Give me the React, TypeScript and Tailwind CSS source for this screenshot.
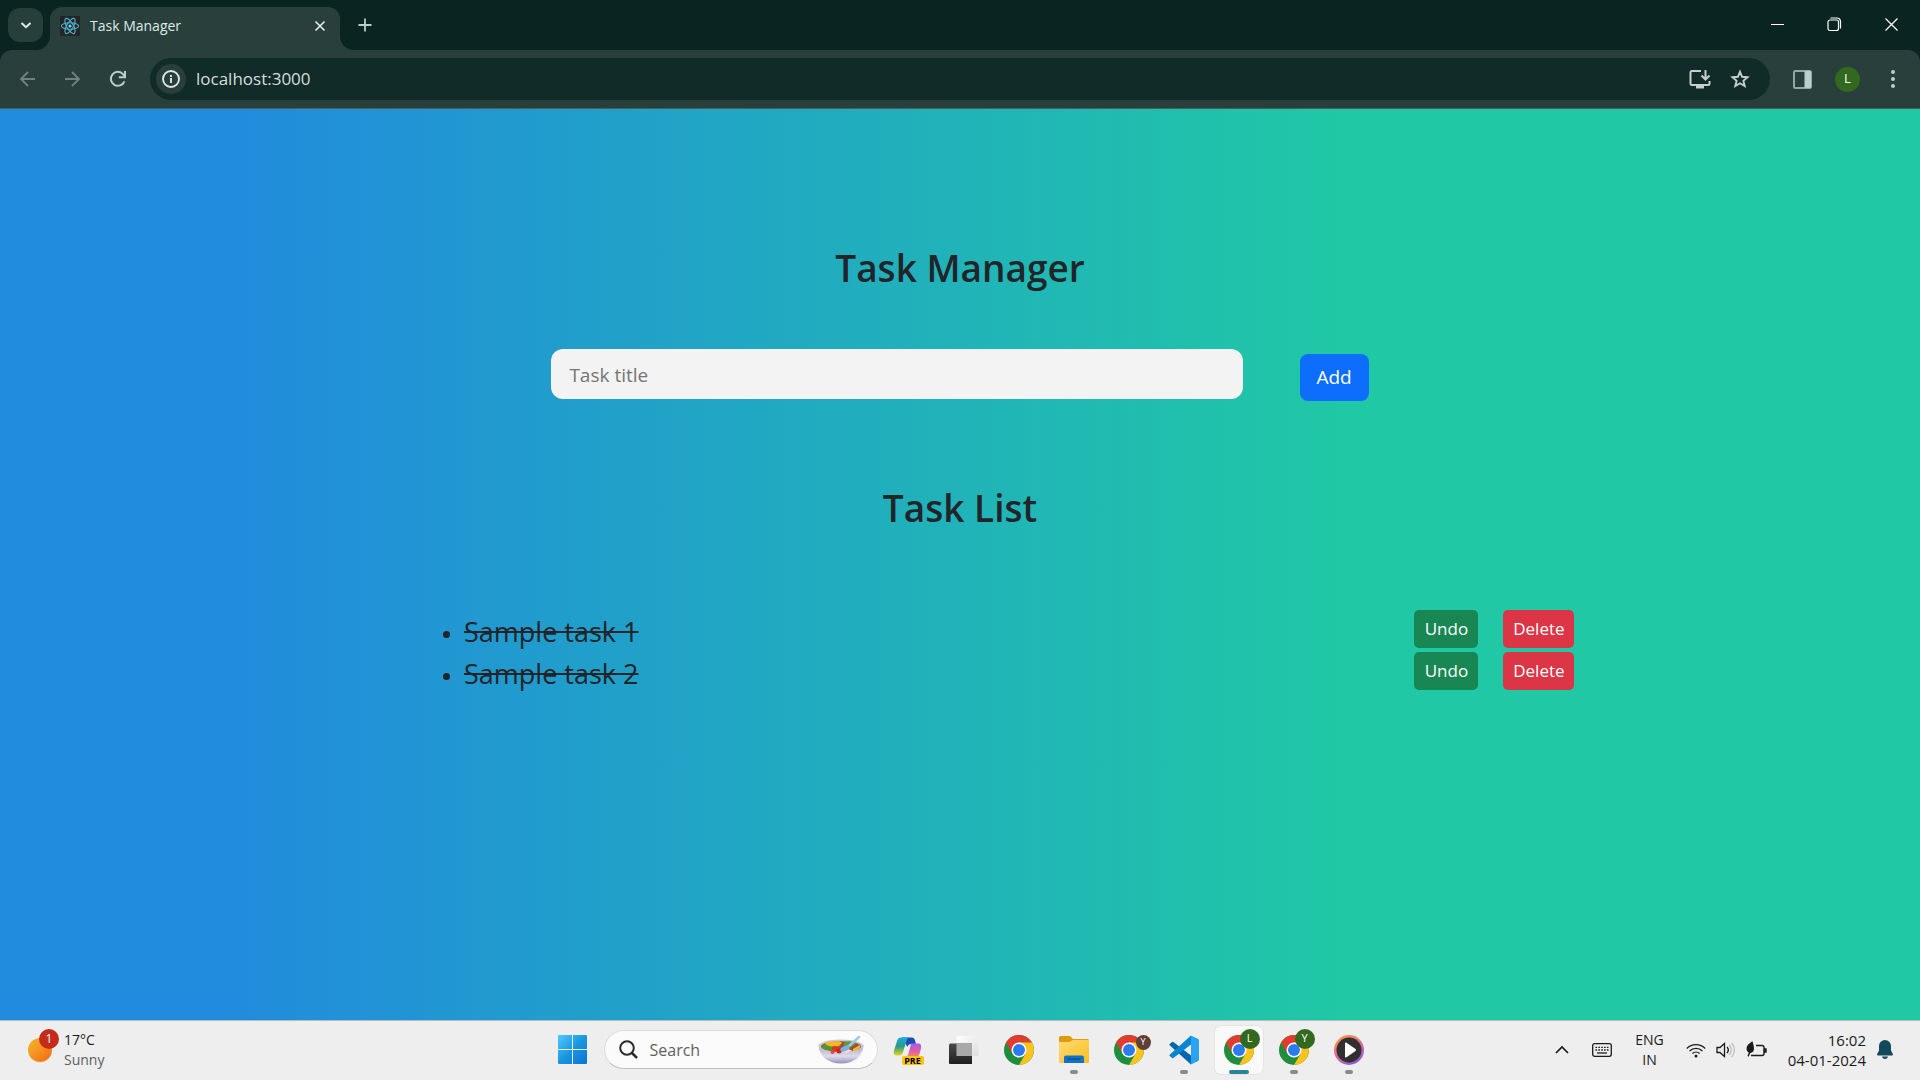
import React from "react";

function ReactLogo() {
  return (
    <svg viewBox="0 0 20 20" className="size-5 shrink-0" aria-hidden="true">
      <rect width="20" height="20" rx="1" fill="#242526" />
      <g fill="none" stroke="#4fb3cc" strokeWidth="1.1">
        <ellipse cx="10" cy="10" rx="8.6" ry="3.3" />
        <ellipse cx="10" cy="10" rx="8.6" ry="3.3" transform="rotate(60 10 10)" />
        <ellipse cx="10" cy="10" rx="8.6" ry="3.3" transform="rotate(120 10 10)" />
      </g>
      <circle cx="10" cy="10" r="1.6" fill="#61dafb" />
    </svg>
  );
}

function TabStrip() {
  return (
    <div className="flex h-[50px] items-end bg-[#0a2421] pl-2 text-[#dfe9e6]">
      <button aria-label="Search tabs" className="mb-2 grid h-[34px] w-[35px] place-items-center rounded-xl bg-[#263f3b]">
        <svg viewBox="0 0 12 12" className="size-3" fill="none" stroke="currentColor" strokeWidth="2" aria-hidden="true">
          <path d="M1.5 4 6 8.2 10.5 4" />
        </svg>
      </button>
      <div className="relative ml-[7px] flex h-[43px] w-[290px] items-center rounded-t-xl bg-[#293f3c] pr-3 pb-[6px] pl-[10px]">
        <svg viewBox="0 0 14 14" className="absolute bottom-0 -left-[14px] size-[14px] fill-[#293f3c]" aria-hidden="true">
          <path d="M14 0A14 14 0 0 1 0 14H14Z" />
        </svg>
        <svg viewBox="0 0 14 14" className="absolute -right-[14px] bottom-0 size-[14px] fill-[#293f3c]" aria-hidden="true">
          <path d="M0 0A14 14 0 0 0 14 14H0Z" />
        </svg>
        <ReactLogo />
        <span className="ml-[10px] flex-1 text-sm">Task Manager</span>
        <button aria-label="Close tab" className="grid size-4 place-items-center">
          <svg viewBox="0 0 12 12" className="size-3" stroke="currentColor" strokeWidth="1.7" aria-hidden="true">
            <path d="M1.5 1.5 10.5 10.5M10.5 1.5 1.5 10.5" />
          </svg>
        </button>
      </div>
      <button aria-label="New tab" className="mb-[18px] ml-[18px] text-[#b7d0ca]">
        <svg viewBox="0 0 14 14" className="size-[14px]" stroke="currentColor" strokeWidth="1.8" aria-hidden="true">
          <path d="M7 .5v13M.5 7h13" />
        </svg>
      </button>
      <div className="mb-[18px] ml-auto flex items-center gap-[42px] pr-[21px] text-white">
        <button aria-label="Minimize">
          <svg viewBox="0 0 15 15" className="size-[15px]" stroke="currentColor" aria-hidden="true">
            <path d="M1 7.5h13" />
          </svg>
        </button>
        <button aria-label="Restore">
          <svg viewBox="0 0 15 15" className="size-[15px]" fill="none" stroke="currentColor" strokeWidth="1.2" aria-hidden="true">
            <rect x="1" y="3" width="10.5" height="10.5" rx="2" />
            <path d="M3.5 1h6.500a3.500 3.500 0 0 1 3.500 3.500v7" />
          </svg>
        </button>
        <button aria-label="Close">
          <svg viewBox="0 0 15 15" className="size-[15px]" stroke="currentColor" strokeWidth="1.2" aria-hidden="true">
            <path d="M1.5 1.5 13.5 13.5M13.5 1.5 1.5 13.5" />
          </svg>
        </button>
      </div>
    </div>
  );
}

function AddressBar() {
  return (
    <div className="bg-[#0a2421]">
      <div className="flex h-[59px] items-center rounded-t-xl border-b border-[#4a5d59] bg-[#293f3c] pr-[17px] pl-[18px]">
        <div className="flex items-center gap-[25px]">
          <button aria-label="Back" className="text-[#70827e]">
            <svg viewBox="0 0 20 20" className="size-5" fill="none" stroke="currentColor" strokeWidth="1.8" aria-hidden="true">
              <path d="M17 10H3.5M10 3 3 10l7 7" />
            </svg>
          </button>
          <button aria-label="Forward" className="text-[#70827e]">
            <svg viewBox="0 0 20 20" className="size-5" fill="none" stroke="currentColor" strokeWidth="1.8" aria-hidden="true">
              <path d="M2 10h13.5M9 3l7 7-7 7" />
            </svg>
          </button>
          <button aria-label="Reload" className="text-[#b7d0ca]">
            <svg viewBox="0 0 20 20" className="size-5" fill="none" stroke="currentColor" strokeWidth="2" aria-hidden="true">
              <path d="M16.4 12.3A7 7 0 1 1 15.2 5.3L17 7.500" />
              <path d="M17 2v6.2h-6.2" />
            </svg>
          </button>
        </div>
        <div className="ml-[22px] flex h-[42px] flex-1 items-center rounded-full bg-[#112b28] pr-5 pl-[6px]">
          <button aria-label="View site information" className="grid size-[30px] place-items-center rounded-full bg-[#293f3c] text-[#dfe6e4]">
            <svg viewBox="0 0 18 18" className="size-[18px]" fill="none" stroke="currentColor" strokeWidth="1.9" aria-hidden="true">
              <circle cx="9" cy="9" r="8" />
              <path d="M9 8v5M9 5v2" />
            </svg>
          </button>
          <input aria-label="Address" defaultValue="localhost:3000" className="ml-[10px] min-w-0 flex-1 bg-transparent text-[17px] text-[#d5dedc] outline-none" />
          <div className="flex items-center gap-[19px] text-[#c7cecd]">
            <button aria-label="Install app">
              <svg viewBox="0 0 22 20" className="h-5 w-[22px]" fill="none" stroke="currentColor" strokeWidth="2" aria-hidden="true">
                <path d="M12 2H3a1.5 1.5 0 0 0-1.5 1.5v11A1.5 1.5 0 0 0 3 16h16a1.5 1.5 0 0 0 1.5-1.500V12" />
                <path d="M16.5 1v9M12.5 6.500l4 4 4-4" />
                <path d="M7 18h8" strokeWidth="3" />
              </svg>
            </button>
            <button aria-label="Bookmark this tab">
              <svg viewBox="0 0 20 20" className="size-5" fill="none" stroke="currentColor" strokeWidth="1.9" aria-hidden="true">
                <path d="m10 2.800 2.100 5 5.400.5-4.100 3.500 1.300 5.300L10 14.300l-4.700 2.800 1.300-5.300-4.100-3.500 5.400-.5Z" />
              </svg>
            </button>
          </div>
        </div>
        <div className="ml-[23px] flex items-center text-[#b7d0ca]">
          <button aria-label="Side panel">
            <svg viewBox="0 0 19 19" className="size-[19px]" aria-hidden="true">
              <rect x="1" y="1" width="17" height="17" rx="1.5" fill="none" stroke="#8fa9a4" strokeWidth="2" />
              <path d="M11.5 1H17a1 1 0 0 1 1 1v15a1 1 0 0 1-1 1h-5.5Z" fill="currentColor" />
            </svg>
          </button>
          <button aria-label="Profile" className="ml-[23px] grid size-[25px] place-items-center rounded-full bg-[#33691e] text-[13px] text-white">
            L
          </button>
          <button aria-label="Menu" className="ml-[23px]">
            <svg viewBox="0 0 20 20" className="size-5" fill="currentColor" aria-hidden="true">
              <circle cx="10" cy="3" r="2" />
              <circle cx="10" cy="10" r="2" />
              <circle cx="10" cy="17" r="2" />
            </svg>
          </button>
        </div>
      </div>
    </div>
  );
}

const tasks = ["Sample task 1", "Sample task 2"];

function TaskManager() {
  return (
    <main className="flex-1 bg-linear-to-r/srgb from-[#218bdd] from-12% to-[#20c8a5] to-70% pt-[133px] text-[#212529]">
      <h1 className="text-center text-[37px] leading-[52px] font-semibold">Task Manager</h1>
      <form className="mx-auto mt-[55px] flex w-[60%] items-start justify-center gap-[57px]">
        <input
          aria-label="Task title"
          placeholder="Task title"
          className="h-[50px] w-[60%] rounded-xl bg-[#f3f3f3] px-[18px] pt-px text-[19px] outline-none placeholder:text-[#757575]"
        />
        <button type="button" className="mt-[5px] h-[47px] w-[69px] rounded-lg bg-[#0d6efd] text-[19px] text-white">
          Add
        </button>
      </form>
      <h2 className="mt-[81px] text-center text-[37px] leading-[52px] font-semibold">Task List</h2>
      <ul className="mt-[77px] mr-[18%] ml-[20%] list-disc pl-20 text-[27px] marker:text-xl">
        {tasks.map((t) => (
          <li key={t} className="h-[42px]">
            <div className="flex h-[42px] items-center justify-between">
              <span className="line-through decoration-2">{t}</span>
              <div className="mb-[6px] flex gap-[25px] text-[17px] text-white">
                <button className="h-[38px] w-16 rounded-[5px] bg-[#198754]">Undo</button>
                <button className="h-[38px] w-[71px] rounded-[5px] bg-[#dc3545]">Delete</button>
              </div>
            </div>
          </li>
        ))}
      </ul>
    </main>
  );
}

function ChromeIcon() {
  return (
    <svg viewBox="0 0 30 30" className="size-[30px]" aria-hidden="true">
      <circle cx="15" cy="15" r="15" fill="#1e8e3e" />
      <path d="M2.01 7.5A15 15 0 0 1 27.99 7.5H15L8.5 18.75Z" fill="#e33b2e" />
      <path d="M27.99 7.5A15 15 0 0 1 15 30L21.5 18.75 15 7.5Z" fill="#fcc31e" />
      <circle cx="15" cy="15" r="7.5" fill="#fff" />
      <circle cx="15" cy="15" r="6" fill="#2b7bf0" />
    </svg>
  );
}

function WindowsIcon() {
  return (
    <svg viewBox="0 0 29 29" className="size-[29px]" aria-hidden="true">
      <defs>
        <linearGradient id="win" x1="0" y1="0" x2="1" y2="1">
          <stop offset="0" stopColor="#4ccbfb" />
          <stop offset="0.5" stopColor="#1a96e0" />
          <stop offset="1" stopColor="#0a74d4" />
        </linearGradient>
      </defs>
      <path d="M1 0h13v14H0V1a1 1 0 0 1 1-1ZM15 0h13a1 1 0 0 1 1 1v13H15ZM0 15h14v14H1a1 1 0 0 1-1-1ZM15 15h14v13a1 1 0 0 1-1 1H15Z" fill="url(#win)" />
    </svg>
  );
}

function BowlIcon() {
  return (
    <svg viewBox="0 0 46 30" className="h-[30px] w-[46px]" aria-hidden="true">
      <defs>
        <linearGradient id="bowl" x1="0" y1="0" x2="0" y2="1">
          <stop offset="0" stopColor="#a7a2c4" />
          <stop offset="0.6" stopColor="#dedbec" />
          <stop offset="1" stopColor="#9891b8" />
        </linearGradient>
      </defs>
      <path d="M.5 10C1 21 10 28.5 23 28.5S45 21 45.5 10Z" fill="url(#bowl)" />
      <ellipse cx="23" cy="11" rx="22.5" ry="6.5" fill="#c9c5dc" />
      <ellipse cx="23" cy="11.5" rx="20" ry="5.3" fill="#a0522c" />
      <path d="M3.5 12c2-4 8-3 11 0l-1 3.5c-4 0-8-1-10-3.5Z" fill="#4f9a2d" />
      <path d="M7 9c1-3 5-3 8-2 3-2 8-1 9 1l-3 3c-4 1-10 1-14-2Z" fill="#f4b920" />
      <path d="M26 8c4-3 10-2 12 1l-5 3h-7Z" fill="#5d9c31" />
      <path d="m35 14 7-4c1 3-2 5-7 6Z" fill="#f1bc29" />
      <circle cx="17" cy="14" r="3" fill="#d9352b" />
      <circle cx="21" cy="16" r="2.5" fill="#c62b22" />
      <circle cx="14.5" cy="17" r="2" fill="#e14b35" />
      <path d="m23 17 7-3 4 1.5-5 2.5Z" fill="#f6e0c8" />
      <path d="m30 12 11-10" stroke="#9cc9ee" strokeWidth="2.5" strokeLinecap="round" />
      <ellipse cx="27" cy="13.5" rx="5" ry="2.6" fill="#79aede" transform="rotate(-25 27 13.5)" />
    </svg>
  );
}

function CopilotIcon() {
  return (
    <svg viewBox="0 0 28 26" className="mr-[3px] h-[26px] w-7" aria-hidden="true">
      <defs>
        <linearGradient id="cpA" x1="0" y1="0" x2="0" y2="1">
          <stop offset="0" stopColor="#1aa7e8" />
          <stop offset="0.5" stopColor="#2f9b86" />
          <stop offset="1" stopColor="#e9d21c" />
        </linearGradient>
        <linearGradient id="cpB" x1="0" y1="0" x2="0" y2="1">
          <stop offset="0" stopColor="#a55bea" />
          <stop offset="0.6" stopColor="#e3609e" />
          <stop offset="1" stopColor="#f58b5c" />
        </linearGradient>
      </defs>
      <path d="M9 .5h9.5c2 0 3 1 3.5 3l1 3.5h-5c-2 0-3 1-3.600 3Z" fill="#1a4bb8" />
      <path d="M8 .5h9c-2 0-2.8 1-3.5 3.5L10 15c-.7 2.5-2 3.5-4 3.5H4C1 18.5.3 16.5 1 13.5L4 4C4.800 1.500 6 .5 8 .5Z" fill="url(#cpA)" />
      <path d="M18 6.5h7c3 0 3.700 2 3 5L26.500 17c-.6 2-2 3-4 3H12c2 0 2.800-1 3.500-3.500L17.500 9Z" fill="url(#cpB)" />
    </svg>
  );
}

function TaskViewIcon() {
  return (
    <svg viewBox="0 0 30 28" className="h-7 w-[30px]" aria-hidden="true">
      <defs>
        <linearGradient id="tvA" x1="0" y1="0" x2="0" y2="1">
          <stop offset="0" stopColor="#4a4a4a" />
          <stop offset="1" stopColor="#1f1f1f" />
        </linearGradient>
        <linearGradient id="tvB" x1="0" y1="0" x2="1" y2="1">
          <stop offset="0" stopColor="#fff" />
          <stop offset="1" stopColor="#dedede" />
        </linearGradient>
      </defs>
      <rect x="7.500" y="0" width="22" height="20" rx="1" fill="url(#tvB)" />
      <path d="M1 7.500h22V28H1a1 1 0 0 1-1-1V8.500Z" fill="url(#tvA)" />
      <rect x="7.500" y="7.500" width="15.500" height="12.500" fill="#a9a9a9" />
    </svg>
  );
}

function FolderIcon() {
  return (
    <svg viewBox="0 0 30 27" className="h-[27px] w-[30px]" aria-hidden="true">
      <defs>
        <linearGradient id="fold" x1="0" y1="0" x2="1" y2="1">
          <stop offset="0" stopColor="#ffdc72" />
          <stop offset="1" stopColor="#fbbd24" />
        </linearGradient>
      </defs>
      <path d="M0 1.500A1.500 1.500 0 0 1 1.500 0H11l3 3h14.500A1.500 1.500 0 0 1 30 4.500V10H0Z" fill="#dd9d0c" />
      <path d="M0 6h10l4-2h16v22a1 1 0 0 1-1 1H1a1 1 0 0 1-1-1Z" fill="url(#fold)" />
      <path d="M5 27v-5.500a2 2 0 0 1 2-2h16a2 2 0 0 1 2 2V27Z" fill="#1272c4" />
      <path d="M8.500 23h13" stroke="#0a4a86" strokeWidth="1.200" />
    </svg>
  );
}

function CodeIcon() {
  return (
    <svg viewBox="0 0 30 30" className="size-[30px]" aria-hidden="true">
      <path d="M1 8.800 2.800 7.200a1.500 1.500 0 0 1 1.900 0L22 20.500v8.900L.9 10.600a1.200 1.200 0 0 1 .1-1.800Z" fill="#0067ae" />
      <path d="M1 21.200l1.800 1.600c.5.500 1.300.5 1.900 0L22 9.500V.6L.9 19.400a1.200 1.200 0 0 0 .1 1.800Z" fill="#0a83d0" />
      <path d="m21.300.3 7.500 3.400A2 2 0 0 1 30 5.500v19a2 2 0 0 1-1.200 1.800l-7.500 3.400c-.5.200-1 .1-1.300-.200.9.700 2 0 2-1V1.500c0-1-1.100-1.700-2-1 .3-.3.800-.400 1.300-.2Z" fill="#29a3f2" />
    </svg>
  );
}

function PlayerIcon() {
  return (
    <svg viewBox="0 0 30 30" className="size-[30px]" aria-hidden="true">
      <defs>
        <linearGradient id="ring" x1="0.2" y1="0" x2="0.7" y2="1">
          <stop offset="0" stopColor="#ff9a3d" />
          <stop offset="0.5" stopColor="#d9689a" />
          <stop offset="1" stopColor="#8a5bd6" />
        </linearGradient>
      </defs>
      <circle cx="15" cy="15" r="15" fill="url(#ring)" />
      <circle cx="15" cy="15" r="12.5" fill="#303030" />
      <path d="M11 8.500c0-.8.800-1.200 1.500-.8l9 6.400c.6.500.6 1.300 0 1.800l-9 6.400c-.7.400-1.500 0-1.500-.8Z" fill="#fff" />
    </svg>
  );
}

type AppProps = {
  label: string;
  children: React.ReactNode;
  badge?: string;
  dark?: boolean;
  active?: boolean;
  running?: boolean;
};

function TaskbarApp({ label, children, badge, dark, active, running }: AppProps) {
  return (
    <button
      aria-label={label}
      className={`relative grid size-12 place-items-center rounded-md ${active ? "bg-[#f9f9f9] ring-1 ring-[#e4e4e4]" : ""}`}
    >
      {children}
      {badge && (
        <span
          className={`absolute grid place-items-center rounded-full text-white ${
            dark ? "top-[9px] right-[2px] size-[15px] bg-[#5d4037] text-[9px]" : "top-[3px] right-[3px] size-5 bg-[#33691e] text-[11px]"
          }`}
        >
          {badge}
        </span>
      )}
      {active && <span className="absolute bottom-0 left-[14px] h-1 w-5 rounded-full bg-[#2a8497]" />}
      {running && <span className="absolute bottom-0 left-5 h-1 w-2 rounded-full bg-[#8a8a8a]" />}
    </button>
  );
}

function Tray() {
  return (
    <div className="flex flex-1 items-center justify-end pr-[27px] text-[#1b1b1b]">
      <button aria-label="Show hidden icons">
        <svg viewBox="0 0 14 14" className="size-[14px]" fill="none" stroke="currentColor" strokeWidth="1.7" aria-hidden="true">
          <path d="m1 10 6-6 6 6" />
        </svg>
      </button>
      <button aria-label="Touch keyboard" className="ml-[23px]">
        <svg viewBox="0 0 20 14" className="h-[14px] w-5" fill="none" stroke="currentColor" strokeWidth="1.3" aria-hidden="true">
          <rect x=".7" y=".7" width="18.6" height="12.6" rx="2" />
          <path d="M3.5 4.3h13M3.5 7h13" strokeDasharray="1.6 1.25" />
          <path d="M5 10h10" />
        </svg>
      </button>
      <button aria-label="Input language" className="ml-[23px] text-center text-sm leading-5">
        ENG
        <br />
        IN
      </button>
      <button aria-label="Network, volume and battery" className="ml-[22px] flex items-center gap-[10px]">
        <svg viewBox="0 0 20 16" className="h-4 w-5" fill="none" stroke="currentColor" strokeWidth="1.4" aria-hidden="true">
          <path d="M.8 6.400a13 13 0 0 1 18.400 0M3.600 9a9.200 9.200 0 0 1 12.800 0M6.400 11.600a5.200 5.200 0 0 1 7.200 0" />
          <circle cx="10" cy="14" r="1.5" fill="currentColor" stroke="none" />
        </svg>
        <svg viewBox="0 0 20 16" className="h-4 w-5" fill="none" stroke="currentColor" strokeWidth="1.3" aria-hidden="true">
          <path d="M1 5.500h3L8.500 1.500v13L4 10.500H1Z" />
          <path d="M11 5a4.500 4.500 0 0 1 0 6" />
          <path d="M13.200 3a7.500 7.500 0 0 1 0 10M15.700 1a10.500 10.500 0 0 1 0 14" stroke="#bdbdbd" />
        </svg>
        <svg viewBox="0 0 21 17" className="h-[17px] w-[21px]" fill="none" stroke="currentColor" strokeWidth="1.4" aria-hidden="true">
          <path d="M10 4.500h6a2 2 0 0 1 2 2v6a2 2 0 0 1-2 2H5" />
          <path d="M18.500 8h1.500v3h-1.500Z" fill="currentColor" />
          <path d="M6.500.3C3 2.500.5 4.500.6 8c.1 1.800.9 3 2.200 3.500L1.500 15l1.200.8 1.600-3.800C7 11.500 8 9.800 8 7.500 8 5 7 2.500 6.500.3Z" fill="currentColor" stroke="none" />
        </svg>
      </button>
      <button aria-label="Clock and notifications" className="ml-[21px] flex items-center gap-[11px] text-right text-[15px] leading-5">
        <span>
          16:02
          <br />
          04-01-2024
        </span>
        <svg viewBox="0 0 16 19" className="h-[19px] w-4" fill="#124a5b" aria-hidden="true">
          <path d="M8 0a6 6 0 0 0-6 6v4.500L.2 14c-.3.700.1 1.500.9 1.500h13.800c.8 0 1.200-.8.9-1.500L14 10.500V6a6 6 0 0 0-6-6ZM5 16.500h6c-.3 1.500-1.500 2.500-3 2.500s-2.700-1-3-2.500Z" />
        </svg>
      </button>
    </div>
  );
}

function Taskbar() {
  return (
    <footer className="flex h-[60px] items-center border-t border-[#b5bdbb] bg-[#eeeeee] pb-[2px]">
      <div className="flex-1 pl-7">
        <button className="flex items-center gap-3 text-left text-sm leading-5">
          <span className="relative">
            <span className="block size-6 rounded-full bg-linear-to-br from-[#f3b72c] to-[#f2660f]" />
            <span className="absolute -top-[9px] left-[11px] grid size-5 place-items-center rounded-full bg-[#c42b1c] text-xs text-white">1</span>
          </span>
          <span className="text-[#1b1b1b]">
            17°C
            <br />
            <span className="text-[#5f5f5f]">Sunny</span>
          </span>
        </button>
      </div>
      <div className="flex items-center gap-[7px]">
        <TaskbarApp label="Start">
          <WindowsIcon />
        </TaskbarApp>
        <label className="flex h-[39px] w-[274px] items-center rounded-full border border-[#dcdcdc] border-b-[#c2c2c2] bg-[#fbfbfb] pr-[13px] pl-[14px]">
          <svg viewBox="0 0 19 19" className="size-[19px]" fill="none" stroke="#2b2b2b" strokeWidth="2" aria-hidden="true">
            <circle cx="8" cy="8" r="6.8" />
            <path d="m13 13 5 5" strokeWidth="2.5" />
          </svg>
          <input aria-label="Search" placeholder="Search" className="ml-3 min-w-0 flex-1 bg-transparent text-base outline-none placeholder:text-[#5f5f5f]" />
          <BowlIcon />
        </label>
        <TaskbarApp label="Copilot">
          <CopilotIcon />
          <span className="absolute right-[9px] bottom-[9px] grid h-[9px] w-[22px] place-items-center rounded-[2px] bg-[#fcc50d] text-[9px] leading-none font-bold text-black">
            PRE
          </span>
        </TaskbarApp>
        <TaskbarApp label="Task view">
          <TaskViewIcon />
        </TaskbarApp>
        <TaskbarApp label="Chrome">
          <ChromeIcon />
        </TaskbarApp>
        <TaskbarApp label="File Explorer" running>
          <FolderIcon />
        </TaskbarApp>
        <TaskbarApp label="Chrome profile" badge="Y" dark>
          <ChromeIcon />
        </TaskbarApp>
        <TaskbarApp label="Visual Studio Code" running>
          <CodeIcon />
        </TaskbarApp>
        <TaskbarApp label="Chrome, Task Manager" badge="L" active>
          <ChromeIcon />
        </TaskbarApp>
        <TaskbarApp label="Chrome profile" badge="Y" running>
          <ChromeIcon />
        </TaskbarApp>
        <TaskbarApp label="Media Player" running>
          <PlayerIcon />
        </TaskbarApp>
      </div>
      <Tray />
    </footer>
  );
}

export default function App() {
  return (
    <div className="flex min-h-screen flex-col font-['Open_Sans','Noto_Sans',sans-serif]">
      <header>
        <TabStrip />
        <AddressBar />
      </header>
      <TaskManager />
      <Taskbar />
    </div>
  );
}
